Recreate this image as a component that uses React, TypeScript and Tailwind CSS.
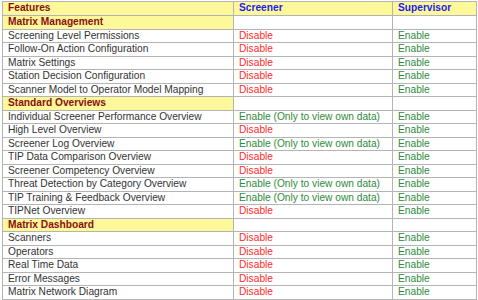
import React from 'react';

type Row =
  | { kind: 'section'; label: string }
  | { kind: 'item'; label: string; screener: string; supervisor: string };

const OWN = 'Enable (Only to view own data)';

const rows: Row[] = [
  { kind: 'section', label: 'Matrix Management' },
  { kind: 'item', label: 'Screening Level Permissions', screener: 'Disable', supervisor: 'Enable' },
  { kind: 'item', label: 'Follow-On Action Configuration', screener: 'Disable', supervisor: 'Enable' },
  { kind: 'item', label: 'Matrix Settings', screener: 'Disable', supervisor: 'Enable' },
  { kind: 'item', label: 'Station Decision Configuration', screener: 'Disable', supervisor: 'Enable' },
  { kind: 'item', label: 'Scanner Model to Operator Model Mapping', screener: 'Disable', supervisor: 'Enable' },
  { kind: 'section', label: 'Standard Overviews' },
  { kind: 'item', label: 'Individual Screener Performance Overview', screener: OWN, supervisor: 'Enable' },
  { kind: 'item', label: 'High Level Overview', screener: 'Disable', supervisor: 'Enable' },
  { kind: 'item', label: 'Screener Log Overview', screener: OWN, supervisor: 'Enable' },
  { kind: 'item', label: 'TIP Data Comparison Overview', screener: 'Disable', supervisor: 'Enable' },
  { kind: 'item', label: 'Screener Competency Overview', screener: 'Disable', supervisor: 'Enable' },
  { kind: 'item', label: 'Threat Detection by Category Overview', screener: OWN, supervisor: 'Enable' },
  { kind: 'item', label: 'TIP Training & Feedback Overview', screener: OWN, supervisor: 'Enable' },
  { kind: 'item', label: 'TIPNet Overview', screener: 'Disable', supervisor: 'Enable' },
  { kind: 'section', label: 'Matrix Dashboard' },
  { kind: 'item', label: 'Scanners', screener: 'Disable', supervisor: 'Enable' },
  { kind: 'item', label: 'Operators', screener: 'Disable', supervisor: 'Enable' },
  { kind: 'item', label: 'Real Time Data', screener: 'Disable', supervisor: 'Enable' },
  { kind: 'item', label: 'Error Messages', screener: 'Disable', supervisor: 'Enable' },
  { kind: 'item', label: 'Matrix Network Diagram', screener: 'Disable', supervisor: 'Enable' },
];

const cell = 'border border-[#b4b4b4] pl-[5px] py-0 leading-none align-middle whitespace-nowrap';

function Access({ value }: { value: string }) {
  const color = value === 'Disable' ? 'text-[#ff2b2b]' : 'text-[#2e8b3a]';
  return <span className={color}>{value}</span>;
}

const App: React.FC = () => {
  return (
    <div className="w-[478px] h-[300px] bg-white pl-[2px] pt-[1px] font-['Liberation_Sans',Arial,sans-serif] text-[10.2px] text-[#333]">
      <table className="border-collapse table-fixed w-[474px]">
        <colgroup>
          <col className="w-[231px]" />
          <col className="w-[159px]" />
          <col className="w-[84px]" />
        </colgroup>
        <thead>
          <tr className="h-[14px] bg-[#fdf89a] font-bold">
            <td className={`${cell} text-[#8b0f0f]`}>Features</td>
            <td className={`${cell} text-[#1c1cf0]`}>Screener</td>
            <td className={`${cell} text-[#1c1cf0]`}>Supervisor</td>
          </tr>
        </thead>
        <tbody>
          {rows.map((row, i) =>
            row.kind === 'section' ? (
              <tr key={i} className="h-[13.5px]">
                <td className={`${cell} bg-[#fdf89a] font-bold text-[#8b0f0f]`}>{row.label}</td>
                <td className={cell}></td>
                <td className={cell}></td>
              </tr>
            ) : (
              <tr key={i} className="h-[13.5px]">
                <td className={cell}>{row.label}</td>
                <td className={cell}>
                  <Access value={row.screener} />
                </td>
                <td className={cell}>
                  <Access value={row.supervisor} />
                </td>
              </tr>
            )
          )}
        </tbody>
      </table>
    </div>
  );
};

export default App;
